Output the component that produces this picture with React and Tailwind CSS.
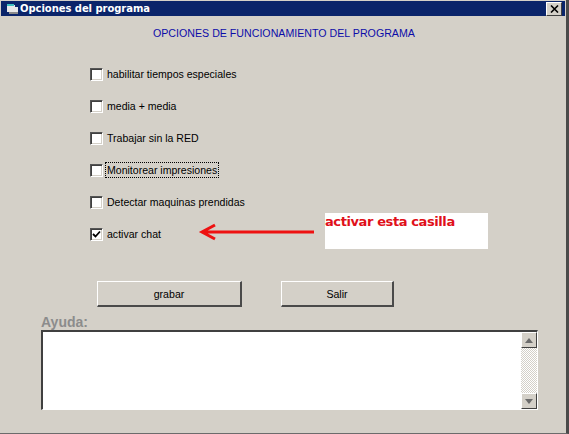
const opciones = [
  { label: "habilitar tiempos especiales" },
  { label: "media + media" },
  { label: "Trabajar sin la RED" },
  { label: "Monitorear impresiones", focus: true },
  { label: "Detectar maquinas prendidas" },
  { label: "activar chat", checked: true },
];

function Check({ checked }) {
  return (
    <span className="w-[13px] h-[13px] shrink-0 bg-white border-t border-l border-t-[#555] border-l-[#555] border-r border-b border-r-white border-b-white shadow-[inset_1px_1px_0_#404040,inset_-1px_-1px_0_#d4d0c8] flex items-center justify-center">
      {checked && (
        <svg width="9" height="9" viewBox="0 0 9 9">
          <path d="M1 4 L3.5 6.5 L8 1.5" fill="none" stroke="#000" strokeWidth="1.8" />
        </svg>
      )}
    </span>
  );
}

function Boton({ children, className }) {
  return (
    <button
      type="button"
      className={`h-[26px] pt-[2px] bg-[#d4d0c8] border-t border-l border-t-white border-l-white border-r-2 border-b-2 border-r-[#4a4a4a] border-b-[#4a4a4a] text-[10.6px] text-black ${className}`}
    >
      {children}
    </button>
  );
}

function ScrollBtn({ up }) {
  return (
    <span className="w-[16px] h-[16px] bg-[#d4d0c8] border-t border-l border-t-white border-l-white border-r border-b border-r-[#404040] border-b-[#404040] flex items-center justify-center">
      <svg width="8" height="5" viewBox="0 0 8 5">
        <path d={up ? "M4 0 L8 5 L0 5 Z" : "M0 0 L8 0 L4 5 Z"} fill="#6b6b6b" />
      </svg>
    </span>
  );
}

export default function App() {
  return (
    <div className="relative w-[569px] h-[434px] overflow-hidden bg-[#d4d0c8] font-['Liberation_Sans',sans-serif] border-r-[3px] border-r-[#4a4a4a] border-b border-b-[#6b6b6b] pl-px pt-px">
      <div className="h-[15px] mr-px bg-[#0a246a] flex items-center pl-[5px] pr-[3px]">
        <svg width="13" height="12" viewBox="0 0 13 12" className="shrink-0">
          <path d="M1 2 H9 V4 H12 V11 H3 V9 H1 Z" fill="#e8e8e8" />
          <path d="M1 1 H8 V3 H1 Z" fill="#3fc0c0" />
          <path d="M3 9 H12 V11 H3 Z" fill="#8a8a8a" />
        </svg>
        <span className="ml-[1px] text-[10px] font-bold text-white font-['DejaVu_Sans',sans-serif] tracking-[-0.05px]">
          Opciones del programa
        </span>
        <span className="ml-auto w-[16px] h-[14px] bg-[#d4d0c8] border-t border-l border-t-white border-l-white border-r border-b border-r-[#404040] border-b-[#404040] flex items-center justify-center">
          <svg width="9" height="8" viewBox="0 0 9 8">
            <path d="M1 0.5 L8 7.5 M8 0.5 L1 7.5" stroke="#000" strokeWidth="1.6" />
          </svg>
        </span>
      </div>

      <h1 className="mt-[10px] pl-[152px] text-[10.65px] leading-[14px] font-normal text-[#0c0ca8]">
        OPCIONES DE FUNCIONAMIENTO DEL PROGRAMA
      </h1>

      <ul className="mt-[27px] pl-[89px] flex flex-col gap-[18px]">
        {opciones.map((o) => (
          <li key={o.label} className="h-[14px] flex items-center gap-[3px]">
            <Check checked={o.checked} />
            <span
              className={`text-[10.55px] leading-[14px] px-[1px] text-black ${
                o.focus ? "outline-1 outline-dotted outline-black" : ""
              }`}
            >
              {o.label}
            </span>
          </li>
        ))}
      </ul>

      <div className="mt-[40px] pl-[96px] flex gap-[39px]">
        <Boton className="w-[145px]">grabar</Boton>
        <Boton className="w-[113px]">Salir</Boton>
      </div>

      <div className="mt-[8px] pl-[40px] text-[14px] leading-[15px] font-bold text-[#8c8c8c]">Ayuda:</div>

      <div className="ml-[40px] w-[497px] h-[80px] flex bg-white border-t-2 border-l-2 border-t-[#404040] border-l-[#404040] border-r border-b border-r-white border-b-white">
        <div className="flex-1" />
        <div className="w-[16px] flex flex-col justify-between bg-[repeating-conic-gradient(#d4d0c8_0%_25%,#ffffff_0%_50%)] bg-[length:2px_2px]">
          <ScrollBtn up />
          <ScrollBtn />
        </div>
      </div>

      {/* anotacion pegada encima de la captura */}
      <div className="absolute left-[325px] top-[213px] w-[163px] h-[36px] bg-white text-[13px] leading-[18px] font-bold text-[#e0101a] font-['DejaVu_Sans',sans-serif] tracking-[-0.4px]">
        activar esta casilla
      </div>
      <svg className="absolute left-[198px] top-[222px]" width="118" height="20" viewBox="0 0 118 20">
        <path d="M116 10 H4 M17 3 L4 10 L17 17" fill="none" stroke="#ee1111" strokeWidth="3" />
      </svg>
    </div>
  );
}
